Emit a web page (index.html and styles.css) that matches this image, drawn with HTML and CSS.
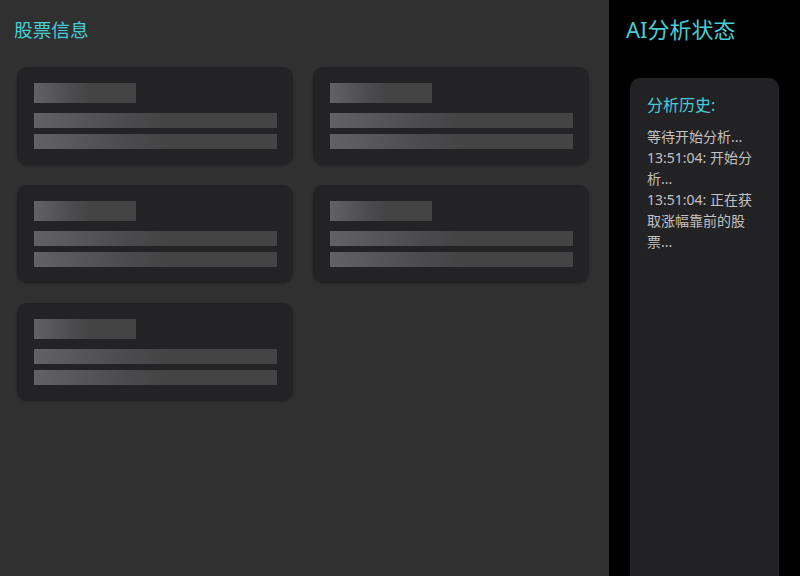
FILE: index.html
```html
<!DOCTYPE html>
<html lang="zh">
<head>
<meta charset="utf-8">
<link rel="stylesheet" href="styles.css">
</head>
<body>
<div class="app">
  <main class="stocks">
    <h2 class="stocks-title">股票信息</h2>
    <div class="grid">
      <div class="card"><div class="sk sk-title"></div><div class="sk sk-line"></div><div class="sk sk-line"></div></div>
      <div class="card"><div class="sk sk-title"></div><div class="sk sk-line"></div><div class="sk sk-line"></div></div>
      <div class="card"><div class="sk sk-title"></div><div class="sk sk-line"></div><div class="sk sk-line"></div></div>
      <div class="card"><div class="sk sk-title"></div><div class="sk sk-line"></div><div class="sk sk-line"></div></div>
      <div class="card"><div class="sk sk-title"></div><div class="sk sk-line"></div><div class="sk sk-line"></div></div>
    </div>
  </main>
  <aside class="side">
    <h2 class="side-title">AI分析状态</h2>
    <div class="history">
      <h3 class="history-title">分析历史:</h3>
      <div class="log">
        <div>等待开始分析...</div>
        <div>13:51:04: 开始分析...</div>
        <div>13:51:04: 正在获取涨幅靠前的股票...</div>
      </div>
    </div>
  </aside>
</div>
</body>
</html>
```
FILE: styles.css
```css
html, body {
  margin: 0;
  padding: 0;
  height: 100%;
  background: #000;
  font-family: "Noto Sans", "Noto Sans CJK SC", sans-serif;
}
.app {
  display: flex;
  height: 100vh;
  overflow: hidden;
}
.stocks {
  width: 609px;
  flex: none;
  box-sizing: border-box;
  background: #303030;
  padding: 16px 20px 0 14px;
}
.stocks-title {
  margin: 0 0 24px 0;
  font-size: 18.7px;
  line-height: 27px;
  font-weight: 400;
  color: #48cdd6;
}
.grid {
  display: grid;
  grid-template-columns: 1fr 1fr;
  gap: 20px;
  margin-left: 3px;
}
.card {
  background: #232225;
  border-radius: 10px;
  padding: 16px 16px 16px 17px;
  box-shadow: 0 1px 3px rgba(0,0,0,0.2);
  display: flex;
  flex-direction: column;
}
.sk {
  background: linear-gradient(90deg, #626163 0%, #4a494c 40%, #444444 55%, #444444 100%);
}
.sk-title {
  width: 102px;
  height: 20px;
  margin-bottom: 10px;
}
.sk-line {
  height: 15px;
}
.sk-line + .sk-line {
  margin-top: 6px;
}
.side {
  flex: 1;
  background: #000;
  padding: 14px 17px 0 17px;
  display: flex;
  flex-direction: column;
  overflow: hidden;
}
.side-title {
  margin: 0;
  font-size: 22px;
  line-height: 30px;
  font-weight: 400;
  color: #48cdd6;
}
.history {
  margin: 34px 4px 0;
  background: #222124;
  border-radius: 10px;
  padding: 15px 17px 17px;
  min-height: 600px;
  flex: none;
}
.history-title {
  margin: 0 0 9px;
  font-size: 16px;
  line-height: 24px;
  font-weight: 400;
  color: #48cdd6;
}
.log {
  font-size: 14px;
  line-height: 21px;
  color: #c2c2c2;
}
```
